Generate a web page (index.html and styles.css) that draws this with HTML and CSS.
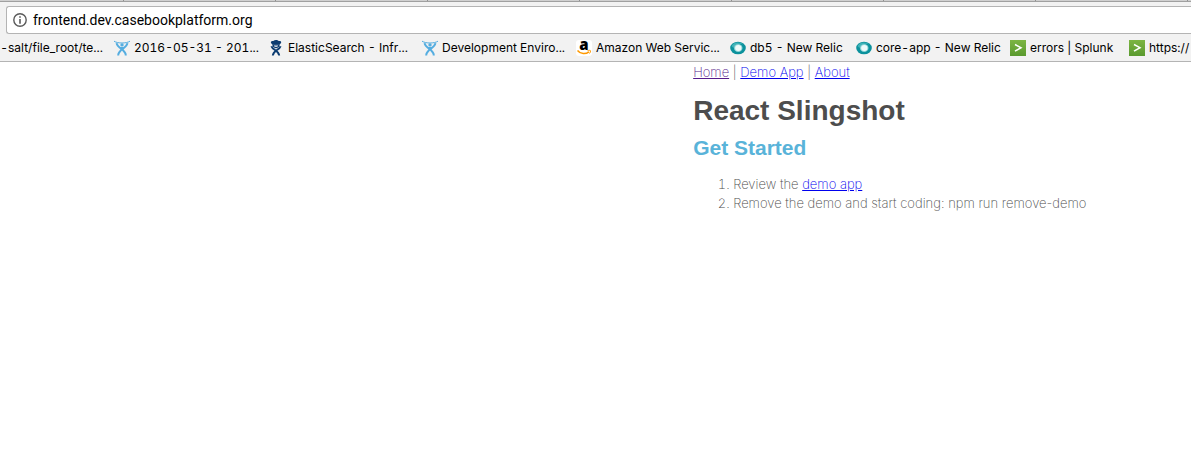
FILE: index.html
```html
<!DOCTYPE html>
<html lang="en">
<head>
<meta charset="utf-8">
<meta name="viewport" content="width=device-width, initial-scale=1">
<title>React Slingshot</title>
<link rel="stylesheet" href="styles.css">
</head>
<body>
<svg class="defs" aria-hidden="true">
  <symbol id="jira" viewBox="0 0 16 16">
    <path d="M0 1.2C4 3.6 12 3.6 16 1.2" fill="none" stroke="currentColor" stroke-width="1"/>
    <circle cx="8" cy="4.9" r="1.7" fill="currentColor"/>
    <path d="M2.6 3.2C3.2 8.3 12 9.500 11.800 15.500M13.400 3.200C12.800 8.300 4 9.500 4.200 15.500" fill="none" stroke="currentColor" stroke-width="2"/>
    <path d="M5.600 7L8 9.200L10.400 7Z" fill="currentColor"/>
  </symbol>
  <symbol id="confluence" viewBox="0 0 16 16">
    <path d="M3.600 3.800C1.800 2 3.500.5 5.300 1C6.500-.3 9.500-.3 10.600 1C12.700.5 14.200 2 12.400 3.800L11.500 4.800H4.500Z" fill="currentColor"/>
    <path d="M4.500 4.600H11.500V6.500L10 7.500C9 8.500 7 8.500 6 7.500L4.500 6.500Z" fill="currentColor"/>
    <path d="M6 5.600H10V6.200L8 7.100L6 6.200Z" fill="#f2f2f2"/>
    <path d="M3.400 6.200C4.500 10 11 10.500 11.200 15.500M12.600 6.200C11.500 10 5 10.500 4.800 15.500" fill="none" stroke="currentColor" stroke-width="1.900"/>
  </symbol>
  <symbol id="amazon" viewBox="0 0 16 16">
    <rect width="16" height="16" rx="3" fill="#fff"/>
    <text x="8" y="10" text-anchor="middle" font-family="Open Sans, sans-serif" font-weight="800" font-size="15">a</text>
    <path d="M1.500 10.500C4.500 14.300 9.800 14.300 13 11.800" fill="none" stroke="#f90" stroke-width="1.500"/>
    <path d="M11.500 10.700C13 10.200 14.500 10.200 14.500 10.700C14.600 11.800 14.200 12.700 13.500 13.500" fill="none" stroke="#f90" stroke-width="1"/>
  </symbol>
  <symbol id="relic" viewBox="0 0 16 16">
    <ellipse cx="8" cy="8" rx="7.800" ry="6.300" fill="#0b919c"/>
    <path d="M1.500 6C4 1.500 10 1.500 13.500 4.500C10 3 5 3.500 3.500 8Z" fill="#3fb3b8"/>
    <ellipse cx="8.200" cy="8" rx="4.300" ry="4" fill="#8bd3d5"/>
    <ellipse cx="8.300" cy="8" rx="3.200" ry="3" fill="#eefafa"/>
  </symbol>
  <linearGradient id="leaf" x1="0" y1="0" x2="0" y2="1"><stop stop-color="#7cb542"/><stop offset="1" stop-color="#5a9a2f"/></linearGradient>
  <symbol id="splunk" viewBox="0 0 16 16">
    <rect width="16" height="16" fill="url(#leaf)"/>
    <path d="M5 4.500L11 7.700L5 11.200" fill="none" stroke="#fff" stroke-width="1.500"/>
  </symbol>
</svg>
<header class="browser">
  <div class="tabs"><i></i><i></i><i></i><i></i><i></i><i></i><i></i><i></i></div>
  <div class="address">
    <svg class="info" viewBox="0 0 14 14" aria-hidden="true"><circle cx="7" cy="7" r="6.200" fill="none" stroke="#5a5a5a" stroke-width="1.400"/><path d="M6.200 3.200h1.600v1.600H6.200zM6.200 6h1.600v4.800H6.200z" fill="#5a5a5a"/></svg>
    <input class="url" type="text" aria-label="Address" value="frontend.dev.casebookplatform.org">
  </div>
  <nav class="bookmarks" aria-label="Bookmarks">
    <a class="bookmark first" href="#">-salt/file_root/te...</a>
    <a class="bookmark long" href="#"><svg class="icon sky"><use href="#jira"/></svg>2016-05-31 - 201...</a>
    <a class="bookmark long" href="#"><svg class="icon navy"><use href="#confluence"/></svg>ElasticSearch - Infr...</a>
    <a class="bookmark long" href="#"><svg class="icon sky"><use href="#jira"/></svg>Development Enviro...</a>
    <a class="bookmark long" href="#"><svg class="icon"><use href="#amazon"/></svg>Amazon Web Servic...</a>
    <a class="bookmark medium" href="#"><svg class="icon"><use href="#relic"/></svg>db5 - New Relic</a>
    <a class="bookmark long" href="#"><svg class="icon"><use href="#relic"/></svg>core-app - New Relic</a>
    <a class="bookmark short" href="#"><svg class="icon"><use href="#splunk"/></svg>errors | Splunk</a>
    <a class="bookmark short" href="#"><svg class="icon"><use href="#splunk"/></svg>https://</a>
  </nav>
</header>
<main class="page">
  <nav class="links"><a class="visited" href="#">Home</a> | <a href="#">Demo App</a> | <a href="#">About</a></nav>
  <h1 class="title">React Slingshot</h1>
  <h2 class="subtitle">Get Started</h2>
  <ol class="steps">
    <li>Review the <a href="#">demo app</a></li>
    <li>Remove the demo and start coding: npm run remove-demo</li>
  </ol>
</main>
</body>
</html>
```
FILE: styles.css
```css
* { box-sizing: border-box; }
body {
  margin: 0;
  background: #fff;
  overflow-x: hidden;
}
.defs {
  position: absolute;
  width: 0;
  height: 0;
}
.browser {
  background: #f2f2f2;
  border-bottom: 1px solid #b4b4b4;
  font-family: Inter, Roboto, sans-serif;
  font-variant-numeric: tabular-nums;
  color: #000;
  overflow: hidden;
}
.tabs {
  display: flex;
  height: 2px;
  padding-left: 123px;
  background: #d0d0d0;
  border-bottom: 1px solid #a0a0a0;
}
.tabs i {
  flex: 0 0 152px;
  border-left: 1px solid #909090;
}
.address {
  display: flex;
  align-items: center;
  gap: 6px;
  height: 28px;
  margin: 4px 0 0 6px;
  padding-left: 6px;
  background: #fff;
  border: 1px solid #b4b4b4;
  border-right: 0;
  border-radius: 3px 0 0 3px;
}
.info {
  flex: none;
  width: 14px;
  height: 14px;
}
.url {
  flex: 1;
  min-width: 0;
  padding: 0;
  border: 0;
  outline: 0;
  background: none;
  font: 14px/20px Roboto, sans-serif;
  color: #000;
}
.bookmarks {
  display: flex;
  height: 27px;
}
.bookmark {
  display: flex;
  flex: none;
  align-items: center;
  gap: 4px;
  color: #000;
  font-size: 12px;
  line-height: 16px;
  text-decoration: none;
  white-space: nowrap;
}
.first {
  width: 114px;
  justify-content: flex-end;
  padding-right: 11px;
}
.long { width: 154px; }
.medium { width: 126px; }
.short { width: 119px; }
.icon {
  flex: none;
  width: 16px;
  height: 16px;
}
.sky { color: #55ade0; }
.navy { color: #0b3b70; }
.page {
  padding: 1px 0 0 58.2%;
  font-family: Inter, Roboto, sans-serif;
  font-size: 13px;
  font-weight: 200;
  line-height: 19px;
  color: #4d4d4d;
  white-space: nowrap;
}
.page a { color: #00e; }
.page .visited { color: #551a8b; }
.title {
  margin: 11px 0 0;
  font: bold 28px/35px "Liberation Sans", Arial, sans-serif;
}
.subtitle {
  margin: 7px 0 0;
  font: bold 21px/26px "Liberation Sans", Arial, sans-serif;
  color: #59b3d9;
}
.steps {
  margin: 14px 0 0;
  padding-left: 40px;
}
```
